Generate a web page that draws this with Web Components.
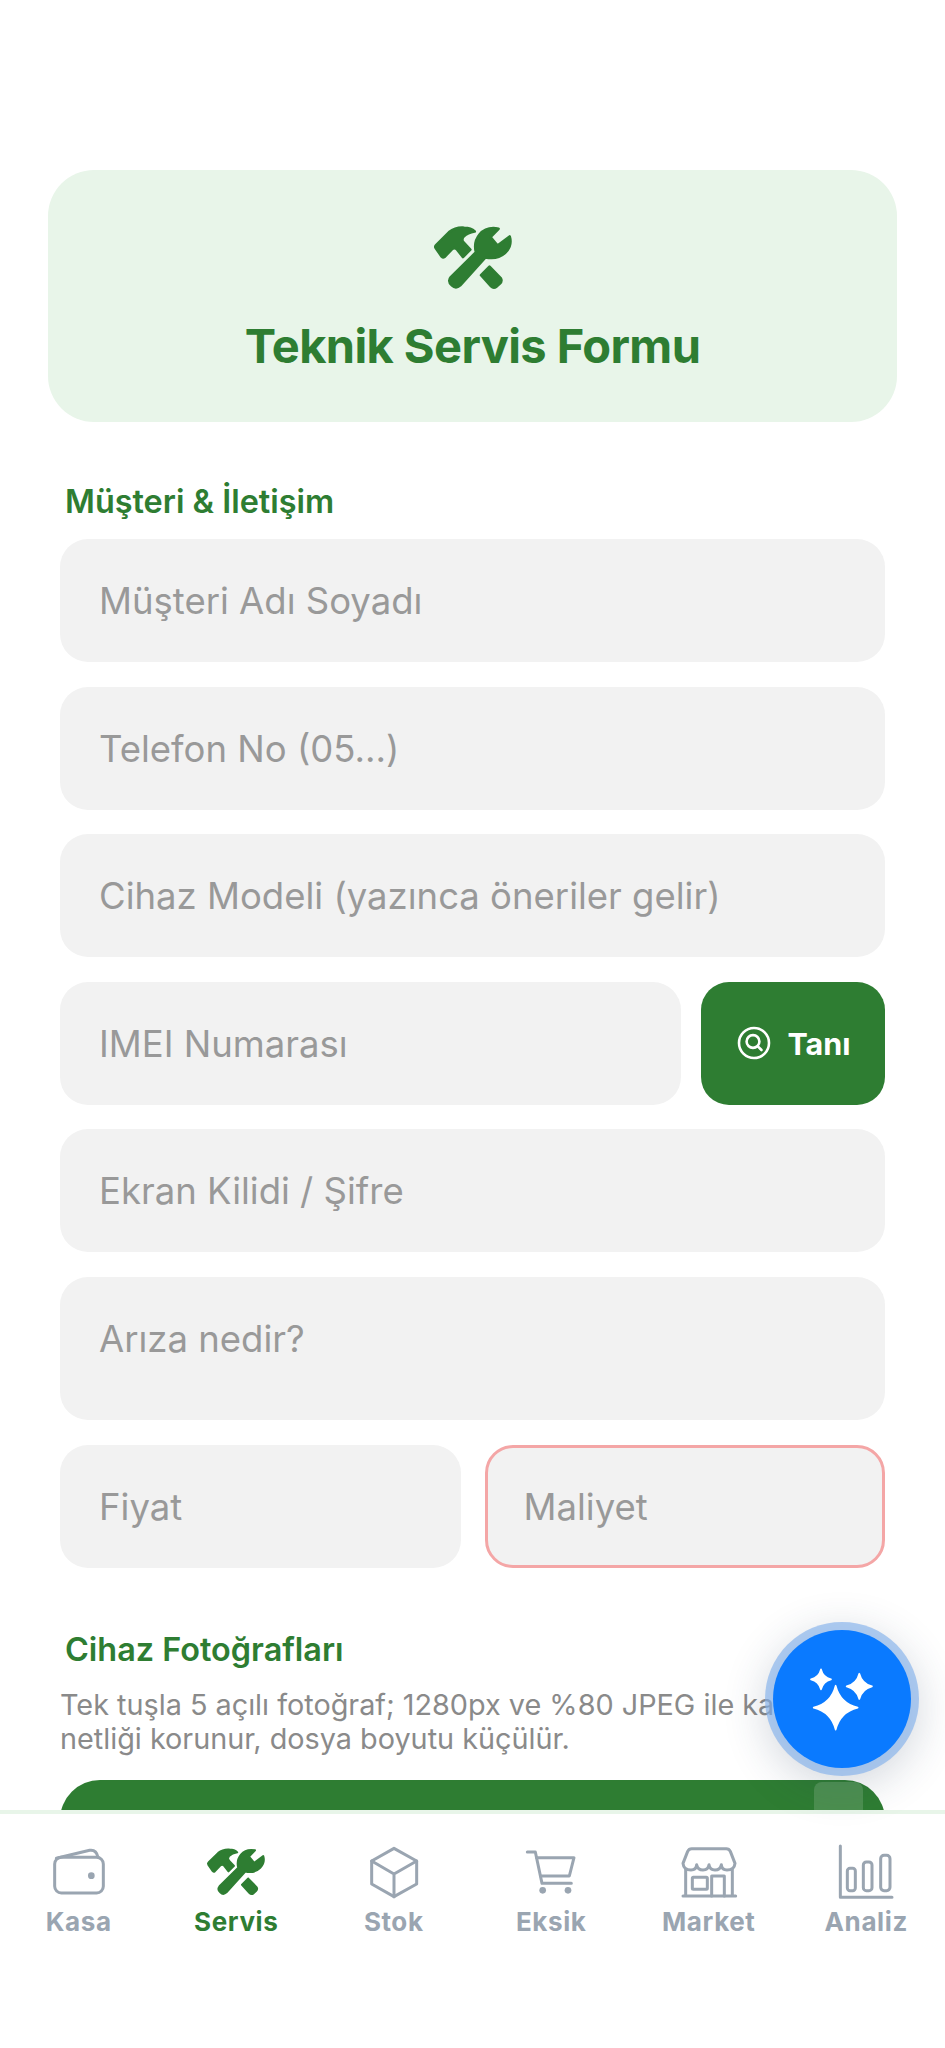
<!DOCTYPE html>
<html lang="tr">
<head>
<meta charset="utf-8">
<title>Teknik Servis Formu</title>
<style>
  html, body { margin: 0; padding: 0; background: #fff; }
  body { font-family: Inter, "Noto Sans", sans-serif; }
</style>
</head>
<body>
<app-shell>
  <service-header>Teknik Servis Formu</service-header>
  <section-title>Müşteri &amp; İletişim</section-title>
  <form-stack>
    <form-field>Müşteri Adı Soyadı</form-field>
    <form-field>Telefon No (05...)</form-field>
    <form-field>Cihaz Modeli (yazınca öneriler gelir)</form-field>
    <form-row>
      <form-field grow>IMEI Numarası</form-field>
      <scan-button>Tanı</scan-button>
    </form-row>
    <form-field>Ekran Kilidi / Şifre</form-field>
    <form-field tall>Arıza nedir?</form-field>
    <form-row wide>
      <form-field grow>Fiyat</form-field>
      <form-field grow danger>Maliyet</form-field>
    </form-row>
  </form-stack>
  <section-title photos>Cihaz Fotoğrafları</section-title>
  <photo-hint>Tek tuşla 5 açılı fotoğraf; 1280px ve %80 JPEG ile kart<br>netliği korunur, dosya boyutu küçülür.</photo-hint>
  <photo-button></photo-button>

  <tab-bar slot="nav">
    <tab-item icon="wallet">Kasa</tab-item>
    <tab-item icon="tools" active>Servis</tab-item>
    <tab-item icon="box">Stok</tab-item>
    <tab-item icon="cart">Eksik</tab-item>
    <tab-item icon="store">Market</tab-item>
    <tab-item icon="chart">Analiz</tab-item>
  </tab-bar>
  <fab-button slot="over"></fab-button>
</app-shell>

<script>
// hammer + wrench, coordinates taken from a 3x crop
const TOOLS_PATHS = `<g stroke="currentColor" stroke-width="8" stroke-linejoin="round">
  <path d="M165 147Q162 143 167 138L205 100Q224 85 250 87Q270 87 281 98Q260 101 248 113Q240 123 248 131L268 152L246 174L229 152Q221 144 213 151L191 174Q187 177 183 173Z"/>
  <path d="M210 234L285 160Q277 130 296 107Q316 83 352 90L328 115L349 140L385 113Q393 140 373 160Q350 183 313 175L238 258Q225 270 213 258Q200 246 210 234Z"/>
  <path d="M325 203L359 238Q363 246 356 253L346 262Q337 268 330 261L300 228Z"/>
</g>`;

const TAB_ICONS = {
  wallet: {cx: 236, stroke: true, body: `
    <rect x="163" y="232" width="146" height="107" rx="20"/>
    <path d="M168 235L268 211Q288 208 293 232"/>
    <circle cx="273" cy="287" r="10" fill="currentColor" stroke="none"/>`},
  tools: {cx: 710, stroke: false, body: `<g transform="translate(623 205) scale(.75)  translate(-160 -82)">${TOOLS_PATHS}</g>`},
  box: {cx: 1180, stroke: true, body: `
    <path d="M1180 205L1248 243V312L1180 350L1113 312V243Z"/>
    <path d="M1113 243L1180 282L1248 243M1180 282V350"/>`},
  cart: {cx: 257, stroke: true, body: `
    <path d="M186 216H210L230 310H318"/>
    <path d="M214 233H326L312 288H226"/>
    <circle cx="232" cy="331" r="10" fill="currentColor" stroke="none"/>
    <circle cx="308" cy="331" r="10" fill="currentColor" stroke="none"/>`},
  store: {cx: 730, stroke: true, body: `
    <path d="M678 206H782Q790 206 794 214L808 250Q806 270 784 270Q768 270 767 254Q764 270 748 270Q732 270 730 254Q728 270 712 270Q696 270 693 254Q692 270 676 270Q654 270 652 250L666 214Q670 206 678 206Z"/>
    <path d="M660 270V348M800 270V348M652 348H810"/>
    <rect x="680" y="292" width="45" height="36" rx="3"/>
    <path d="M738 348V288H776V348"/>`},
  chart: {cx: 1205, stroke: true, body: `
    <path d="M1128 198V352H1283"/>
    <rect x="1149" y="265" width="24" height="67" rx="8"/>
    <rect x="1197" y="246" width="26" height="86" rx="9"/>
    <rect x="1249" y="226" width="28" height="106" rx="10"/>`}
};

class AppShell extends HTMLElement {
  constructor() {
    super();
    this.attachShadow({mode: "open"});
    this.shadowRoot.innerHTML = `
<style>
  :host { display: flex; flex-direction: column; position: relative; width: 945px; height: 2048px; overflow: hidden; background: #fff; }
  .scroll { height: 1810px; flex: none; overflow: hidden; padding-top: 170px; box-sizing: border-box; }
</style>
<div class="scroll"><slot></slot></div>
<slot name="nav"></slot>
<slot name="over"></slot>`;
  }
}

class ServiceHeader extends HTMLElement {
  constructor() {
    super();
    this.attachShadow({mode: "open"});
    this.shadowRoot.innerHTML = `
<style>
  :host { display: flex; flex-direction: column; align-items: center; box-sizing: border-box; height: 252px; margin: 0 48px; padding-top: 56px; background: #e8f5e9; border-radius: 46px; color: #2e7d32; }
  svg { display: block; width: 78px; height: 64px; fill: currentColor; }
  .title { margin-top: 28px; font-size: 47px; line-height: 56px; font-weight: 700; letter-spacing: -.6px; }
</style>
<svg viewBox="160 82 232 190">${TOOLS_PATHS}</svg>
<div class="title"><slot></slot></div>`;
  }
}

class SectionTitle extends HTMLElement {
  constructor() {
    super();
    this.attachShadow({mode: "open"});
    this.shadowRoot.innerHTML = `
<style>
  :host { display: block; margin: 62px 66px 19px 65px; font-size: 32.4px; line-height: 36px; font-weight: 600; color: #2e7d32; }
  :host([photos]) { margin-top: 64px; margin-bottom: 20px; }
</style>
<slot></slot>`;
  }
}

class FormStack extends HTMLElement {
  constructor() {
    super();
    this.attachShadow({mode: "open"});
    this.shadowRoot.innerHTML = `
<style>
  :host { display: flex; flex-direction: column; gap: 24.6px; margin: 0 60px; }
</style>
<slot></slot>`;
  }
}

class FormRow extends HTMLElement {
  constructor() {
    super();
    this.attachShadow({mode: "open"});
    this.shadowRoot.innerHTML = `
<style>
  :host { display: flex; gap: 20px; }
  :host([wide]) { gap: 24px; }
</style>
<slot></slot>`;
  }
}

class FormField extends HTMLElement {
  constructor() {
    super();
    this.attachShadow({mode: "open"});
    this.shadowRoot.innerHTML = `
<style>
  :host { display: block; box-sizing: border-box; height: 123px; padding: 40px 39px 0; background: #f2f2f2; border-radius: 28px; font-size: 36.5px; line-height: 44px; color: #999; white-space: nowrap; }
  :host([tall]) { height: 143px; }
  :host([grow]) { flex: 1 1 0; min-width: 0; }
  :host([danger]) { border: 3px solid #f4a6a6; padding: 37px 36px 0; }
</style>
<slot></slot>`;
  }
}

class ScanButton extends HTMLElement {
  constructor() {
    super();
    this.attachShadow({mode: "open"});
    this.shadowRoot.innerHTML = `
<style>
  :host { display: flex; flex: none; align-items: center; justify-content: center; gap: 16px; box-sizing: border-box; padding-left: 2px; width: 184px; height: 123px; background: #2e7d32; border-radius: 28px; color: #fff; font-size: 30.5px; font-weight: 700; }
  svg { width: 34px; height: 34px; fill: none; stroke: currentColor; stroke-width: 2.6; stroke-linecap: round; }
</style>
<svg viewBox="0 0 34 34"><circle cx="17" cy="17" r="15"/><circle cx="16" cy="15.5" r="6.4"/><path d="M20.8 20.3L24.5 24"/></svg>
<span><slot></slot></span>`;
  }
}

class PhotoHint extends HTMLElement {
  constructor() {
    super();
    this.attachShadow({mode: "open"});
    this.shadowRoot.innerHTML = `
<style>
  :host { display: block; margin: 0 60px; font-size: 28.8px; line-height: 34px; color: #8a8a8a; }
</style>
<slot></slot>`;
  }
}

class PhotoButton extends HTMLElement {
  constructor() {
    super();
    this.attachShadow({mode: "open"});
    this.shadowRoot.innerHTML = `
<style>
  :host { display: block; height: 120px; margin: 24px 60px 0; background: #2e7d32; border-radius: 40px; }
</style>`;
  }
}

class TabBar extends HTMLElement {
  constructor() {
    super();
    this.attachShadow({mode: "open"});
    this.shadowRoot.innerHTML = `
<style>
  :host { display: grid; grid-template-columns: repeat(6, 1fr); flex: 1; box-sizing: border-box; padding-top: 32px; border-top: 4px solid #e8f5e9; background: #fff; }
</style>
<slot></slot>`;
  }
}

class TabItem extends HTMLElement {
  constructor() {
    super();
    this.attachShadow({mode: "open"});
    const icon = TAB_ICONS[this.getAttribute("icon")];
    const paint = icon.stroke
      ? `fill="none" stroke="currentColor" stroke-width="9" stroke-linecap="round" stroke-linejoin="round"`
      : `fill="currentColor"`;
    this.shadowRoot.innerHTML = `
<style>
  :host { display: flex; flex-direction: column; align-items: center; color: #9aa5b1; font-size: 26px; line-height: 32px; font-weight: 700; letter-spacing: .6px; }
  :host([active]) { color: #2e7d32; }
  svg { display: block; width: 60px; height: 53.33px; overflow: visible; }
  .label { margin-top: 7px; }
</style>
<svg viewBox="${icon.cx - 90} 198 180 160" ${paint}>${icon.body}</svg>
<div class="label"><slot></slot></div>`;
  }
}

class FabButton extends HTMLElement {
  constructor() {
    super();
    this.attachShadow({mode: "open"});
    const star = (x, y, r) => {
      const k = r * .2;
      return `M${x} ${y - r}Q${x + k} ${y - k} ${x + r} ${y}Q${x + k} ${y + k} ${x} ${y + r}Q${x - k} ${y + k} ${x - r} ${y}Q${x - k} ${y - k} ${x} ${y - r}Z`;
    };
    this.shadowRoot.innerHTML = `
<style>
  :host { position: absolute; left: 772.5px; top: 1630px; width: 138px; height: 138px; display: flex; align-items: center; justify-content: center; border-radius: 50%; background: #0a7aff; box-shadow: 0 0 0 8px rgba(130, 176, 235, .65), 0 10px 44px 8px rgba(40, 60, 90, .2); }
  svg { width: 63.3px; height: 66.7px; fill: #fff; stroke: #fff; stroke-width: 5; stroke-linejoin: round; }
  .ghost { position: absolute; left: 41px; top: 152px; width: 49px; height: 28px; border-radius: 8px 8px 0 0; background: rgba(255, 255, 255, .14); }
</style>
<svg viewBox="390 230 190 200"><path d="${star(467, 355, 66)}"/><path d="${star(423, 270, 30)}"/><path d="${star(538, 291, 38)}"/></svg>
<div class="ghost"></div>`;
  }
}

customElements.define("app-shell", AppShell);
customElements.define("service-header", ServiceHeader);
customElements.define("section-title", SectionTitle);
customElements.define("form-stack", FormStack);
customElements.define("form-row", FormRow);
customElements.define("form-field", FormField);
customElements.define("scan-button", ScanButton);
customElements.define("photo-hint", PhotoHint);
customElements.define("photo-button", PhotoButton);
customElements.define("tab-bar", TabBar);
customElements.define("tab-item", TabItem);
customElements.define("fab-button", FabButton);
</script>
</body>
</html>
